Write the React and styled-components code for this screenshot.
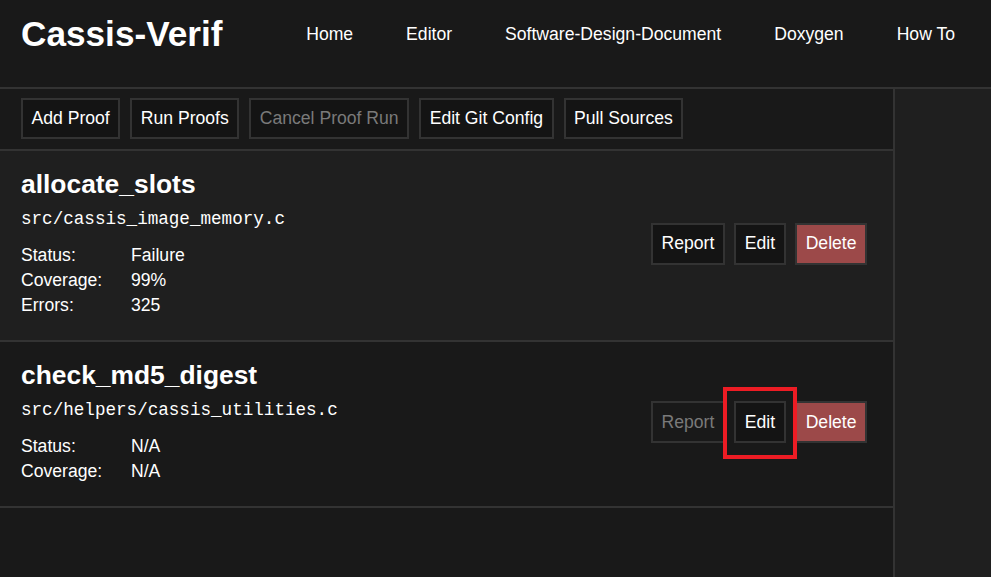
import { createGlobalStyle } from "styled-components";
import styled from "styled-components";

const GlobalStyle = createGlobalStyle`
  html, body {
    margin: 0;
    padding: 0;
    background-color: #191919;
    color: #ffffff;
    font-family: "Liberation Sans", Arial, sans-serif;
  }
  * {
    box-sizing: border-box;
  }
`;

const Page = styled.div`
  display: flex;
  flex-direction: column;
  min-height: 100vh;
  background-color: #191919;
`;

const Header = styled.header`
  display: flex;
  align-items: flex-start;
  height: 89px;
  padding: 0 36px 0 21px;
  border-bottom: 2px solid #333;
`;

const Brand = styled.h1`
  margin: 16px 0 0;
  font-size: 35.2px;
  line-height: 1;
  font-weight: 700;
`;

const Nav = styled.nav`
  display: flex;
  gap: 53px;
  margin-left: auto;
  margin-top: 26px;
`;

const NavLink = styled.a`
  color: #fff;
  text-decoration: none;
  font-size: 17.6px;
  line-height: 1;
  cursor: pointer;
`;

const Body = styled.div`
  flex: 1;
  display: flex;
`;

const Main = styled.main`
  flex: 1;
  display: flex;
  flex-direction: column;
`;

const Sidebar = styled.aside`
  width: 98px;
  background-color: #1f1f1f;
  border-left: 2px solid #333;
`;

const Toolbar = styled.div`
  display: flex;
  gap: 10px;
  padding: 9px 21px 10px;
  border-bottom: 2px solid #333;
`;

const Button = styled.button`
  height: ${(p) => (p.$tall ? "42px" : "41px")};
  padding: 0 8.5px;
  border: 2px solid #333;
  background-color: ${(p) => (p.$danger ? "#9c4949" : p.$ghost ? "transparent" : "#141414")};
  color: ${(p) => (p.disabled ? "#7a7a7a" : "#fff")};
  font-family: "Liberation Sans", Arial, sans-serif;
  font-size: 17.6px;
  cursor: ${(p) => (p.disabled ? "not-allowed" : "pointer")};
`;

const Card = styled.section`
  display: flex;
  align-items: center;
  justify-content: space-between;
  padding: 18px 26px 22px 21px;
  background-color: ${(p) => (p.$shade ? "#1f1f1f" : "#191919")};
  border-bottom: 2px solid #333;
`;

const Info = styled.div`
  display: flex;
  flex-direction: column;
`;

const Title = styled.h2`
  margin: 0;
  font-size: 26.4px;
  line-height: 30px;
  font-weight: 700;
`;

const Path = styled.code`
  margin-top: 10px;
  font-family: "Liberation Mono", "Courier New", monospace;
  font-size: 17.6px;
  line-height: 20px;
`;

const Stats = styled.div`
  display: grid;
  grid-template-columns: 110px auto;
  margin-top: 14px;
  font-size: 17.6px;
  line-height: 25px;
`;

const Actions = styled.div`
  display: flex;
  gap: 9.5px;
`;

const Highlight = styled.span`
  position: relative;
  display: inline-flex;
  &::after {
    content: "";
    position: absolute;
    inset: -14px -11px -16px -11px;
    border: 4px solid #ed1c24;
    pointer-events: none;
    z-index: 2;
  }
`;

const proofs = [
  {
    name: "allocate_slots",
    file: "src/cassis_image_memory.c",
    stats: [
      ["Status:", "Failure"],
      ["Coverage:", "99%"],
      ["Errors:", "325"],
    ],
    hasReport: true,
  },
  {
    name: "check_md5_digest",
    file: "src/helpers/cassis_utilities.c",
    stats: [
      ["Status:", "N/A"],
      ["Coverage:", "N/A"],
    ],
    hasReport: false,
    highlightEdit: true,
  },
];

const links = ["Home", "Editor", "Software-Design-Document", "Doxygen", "How To"];

const App = () => {
  return (
    <Page>
      <GlobalStyle />
      <Header>
        <Brand>Cassis-Verif</Brand>
        <Nav>
          {links.map((l) => (
            <NavLink key={l}>{l}</NavLink>
          ))}
        </Nav>
      </Header>
      <Body>
        <Main>
          <Toolbar>
            <Button>Add Proof</Button>
            <Button>Run Proofs</Button>
            <Button disabled>Cancel Proof Run</Button>
            <Button>Edit Git Config</Button>
            <Button>Pull Sources</Button>
          </Toolbar>
          {proofs.map((p, i) => (
            <Card key={p.name} $shade={i % 2 === 0}>
              <Info>
                <Title>{p.name}</Title>
                <Path>{p.file}</Path>
                <Stats>
                  {p.stats.map(([k, v]) => [
                    <span key={k}>{k}</span>,
                    <span key={k + "v"}>{v}</span>,
                  ])}
                </Stats>
              </Info>
              <Actions>
                <Button $tall disabled={!p.hasReport} $ghost={!p.hasReport}>
                  Report
                </Button>
                {p.highlightEdit ? (
                  <Highlight>
                    <Button $tall>Edit</Button>
                  </Highlight>
                ) : (
                  <Button $tall>Edit</Button>
                )}
                <Button $tall $danger>
                  Delete
                </Button>
              </Actions>
            </Card>
          ))}
        </Main>
        <Sidebar />
      </Body>
    </Page>
  );
};

export default App;
